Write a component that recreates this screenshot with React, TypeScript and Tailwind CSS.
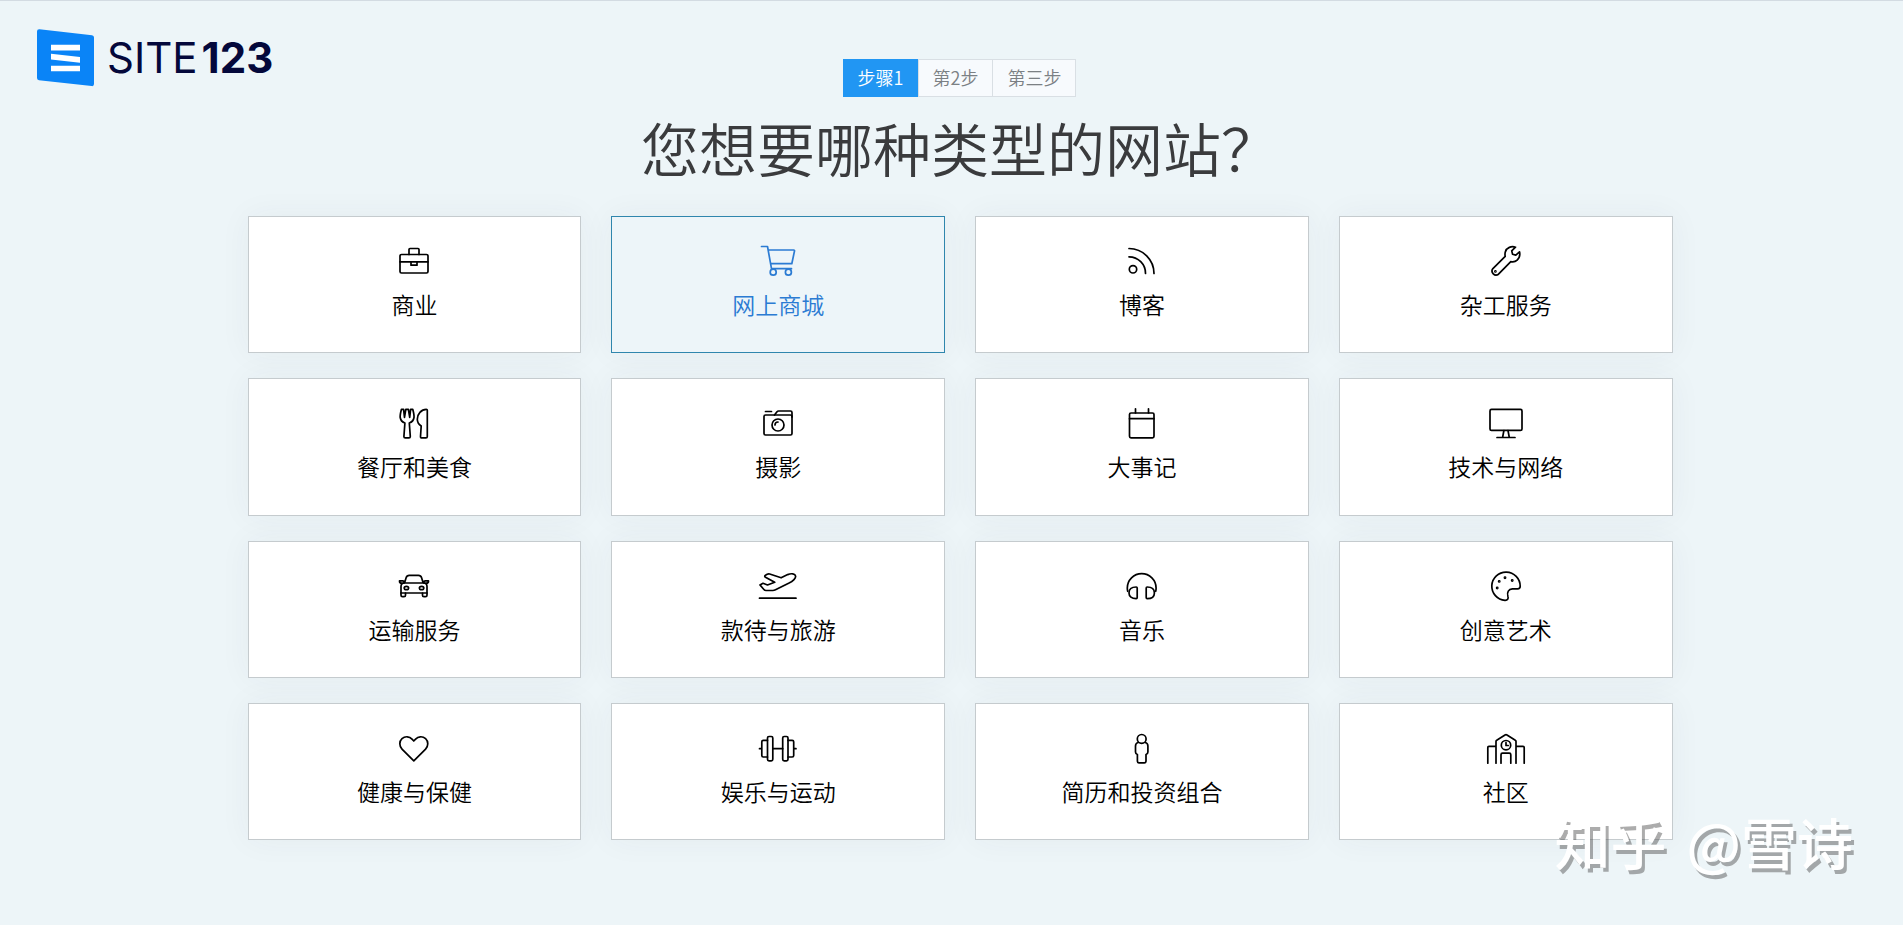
import { ReactNode, useState } from "react";
import clsx from "clsx";

type Category = {
  id: string;
  label: string;
  icon: ReactNode;
};

const steps = ["步骤1", "第2步", "第三步"];

const categories: Category[] = [
  {
    id: "business",
    label: "商业",
    icon: (
      <>
        <rect x="6" y="9.5" width="28" height="18.5" rx="1.5" />
        <path d="M15 9.5V4.5a1 1 0 0 1 1-1h8a1 1 0 0 1 1 1v5M6 16.8h28M17 16.8v3.4h6v-3.4" />
      </>
    ),
  },
  {
    id: "store",
    label: "网上商城",
    icon: (
      <>
        <path d="M3.5 1.5h6l4 22.2h20M10.3 5h25.4a.8.8 0 0 1 .8 1l-2.7 12.7H12.6" />
        <circle cx="15.2" cy="27.2" r="3" />
        <circle cx="30.4" cy="27.2" r="3" />
      </>
    ),
  },
  {
    id: "blog",
    label: "博客",
    icon: (
      <>
        <circle cx="11" cy="24.3" r="3.7" />
        <path d="M7 11.8a16.5 16.5 0 0 1 16.5 16.7M7 3.5a25 25 0 0 1 25 25" />
      </>
    ),
  },
  {
    id: "handyman",
    label: "杂工服务",
    icon: (
      <>
        <path d="M29.5 2.2C25.5.8 20.5 2.5 19.3 7c-.4 1.6-.4 3-.1 4.4L6.900 23.600a4 4 0 0 0 5.600 5.600l12.300-12.600c5 1.200 9-2.500 9-7.500 0-.8-.1-1.500-.3-2.300l-3.700 3.300-3.200-.9-.9-3.300z" />
        <circle cx="9.4" cy="26.4" r=".5" />
      </>
    ),
  },
  {
    id: "food",
    label: "餐厅和美食",
    icon: (
      <>
        <path d="M7.4 2.4C6.4 6 6 9 6.2 10.5c.5 3 2.2 4.7 4.7 5.5L9.9 29.5q0 1.4 1.4 1.4h3.6q1.4 0 1.4-1.4L15.3 16c2.5-.8 4.2-2.5 4.7-5.5.2-1.5-.2-4.5-1.2-8.1h-2.2l-.9 8-1.3-8h-2.6l-1.3 8-.9-8z" />
        <path d="M33.3 3.2v26.3q0 1.4-1.4 1.4h-4q-1.5 0-1.4-1.4l.7-10.5c-3-2-3.9-4-3.9-6.8 0-5 4-9.8 9-9.8q1 0 1 .8z" />
      </>
    ),
  },
  {
    id: "photo",
    label: "摄影",
    icon: (
      <>
        <rect x="6" y="8" width="28" height="20" rx="1.5" />
        <path d="M7.5 4.5h6M16.5 8l2.500-3.300q.6-.7 1.500-.7h12q1.500 0 1.500 1.500V10M17 18a3 3 0 0 1 3-3" />
        <circle cx="20" cy="18" r="6" />
      </>
    ),
  },
  {
    id: "events",
    label: "大事记",
    icon: (
      <>
        <rect x="7.500" y="6" width="24.500" height="24.800" rx="1.5" />
        <path d="M13.5 1.800V6M26.500 1.800V6M7.500 11.700H32" />
      </>
    ),
  },
  {
    id: "tech",
    label: "技术与网络",
    icon: (
      <>
        <rect x="4" y="2.4" width="32" height="21" rx="1.5" />
        <path d="M17.9 23.5l-1.300 7M22 23.500l1.300 7M11 30.500h18" />
      </>
    ),
  },
  {
    id: "transport",
    label: "运输服务",
    icon: (
      <>
        <path d="M10.5 13l1.700-5.500q.7-2.200 3-2.200h9.300q2.300 0 3 2.200L29.200 13M7 23v-6.500q0-3.500 3.500-3.500h19q3.500 0 3.500 3.500V23zM10 13.200H7.500q-2 0-2-2.300h3.300q1.300 0 1.300 1.300M29.900 13.200h2.600q2 0 2-2.300h-3.300q-1.300 0-1.300 1.300" />
        <path d="M7 23v2.200a1.500 1.500 0 0 0 1.500 1.500h1.500a1.500 1.500 0 0 0 1.500-1.500V23M28.500 23v2.200a1.500 1.500 0 0 0 1.500 1.500h1.500a1.500 1.500 0 0 0 1.500-1.500V23" />
        <ellipse cx="12.400" cy="18" rx="2.200" ry="1.700" />
        <ellipse cx="27.600" cy="18" rx="2.200" ry="1.700" />
      </>
    ),
  },
  {
    id: "travel",
    label: "款待与旅游",
    icon: (
      <>
        <path d="M1.5 28.2H38" />
        <path d="M2 15l3-1.700 4.500 1.700 7.200-2.700L7.500 7.200q-1.500-1 0-2l1.700-1q1.200-.6 2.500-.2l11.400 3.800 6.600-3.200c3.500-1.500 7.500-1 7.900 1.500.3 2.500-2 4.500-7 7.200l-13.100 6.500q-1.300.7-2.700.7H8q-1.300 0-2.100-1z" />
      </>
    ),
  },
  {
    id: "music",
    label: "音乐",
    icon: (
      <>
        <path d="M5.700 21.300Q5.300 19.800 5.300 18a14.400 14.400 0 0 1 28.800 0q0 1.800-.4 3.300" />
        <path d="M15.200 18v9.600a1 1 0 0 1-1 1C9.700 28.600 7 26.500 7 22.900S9.700 17 14.200 17a1 1 0 0 1 1 1zM24.200 18v9.600a1 1 0 0 0 1 1c4.500 0 7.200-2.100 7.200-5.700S29.700 17 25.200 17a1 1 0 0 0-1 1z" />
      </>
    ),
  },
  {
    id: "art",
    label: "创意艺术",
    icon: (
      <>
        <path d="M34.200 16.300A14.200 14.200 0 1 0 19 30.400c2.400.1 3.800-1.600 2.900-4.200-1.200-4 .7-7.200 4.500-7.400h5.200c1.600 0 2.600-1 2.600-2.500z" />
        <circle cx="11.200" cy="18" r=".6" />
        <circle cx="13.200" cy="11.400" r=".6" />
        <circle cx="19" cy="7.800" r=".6" />
        <circle cx="26.200" cy="10.500" r=".6" />
      </>
    ),
  },
  {
    id: "health",
    label: "健康与保健",
    icon: (
      <path d="M19.800 28.900L8 17.200C5.200 14.300 5 9.300 8 6.600c3.200-2.800 7.500-2.200 10 .5l1.800 1.900L21.600 7.100c2.500-2.700 6.800-3.300 10-.5 3 2.700 2.800 7.700 0 10.600z" />
    ),
  },
  {
    id: "sports",
    label: "娱乐与运动",
    icon: (
      <>
        <rect x="9.500" y="4.500" width="5.300" height="24.300" rx="1.500" />
        <rect x="24.700" y="4.500" width="5.300" height="24.300" rx="1.500" />
        <path d="M1.500 16.700h2.300M14.800 16.700h9.900M35.700 16.700H38M9.500 8.300H5.300q-1.500 0-1.500 1.500v13.700q0 1.500 1.500 1.500h4.200M30 8.300h4.200q1.500 0 1.500 1.500v13.700q0 1.500-1.500 1.500H30" />
      </>
    ),
  },
  {
    id: "resume",
    label: "简历和投资组合",
    icon: (
      <>
        <circle cx="19.700" cy="6.900" r="4.400" />
        <path d="M16.300 10.500q-2.800.5-2.800 3.500v6q0 2 1.900 2.500v6.700q0 1.600 1.600 1.600h5.400q1.600 0 1.600-1.600v-6.700q1.900-.5 1.900-2.500v-6q0-3-2.800-3.500" />
      </>
    ),
  },
  {
    id: "community",
    label: "社区",
    icon: (
      <>
        <path d="M10 31.200V9.500q0-.8.700-1.200L19 3q1-.6 2 0l8.300 5.300q.7.400.7 1.200v21.700M10 14.300H3q-1.200 0-1.200 1.200v15.700M30 14.300h7q1.200 0 1.200 1.200v15.700M15 31.200v-8.500q0-1.500 1.500-1.500h6.800q1.500 0 1.500 1.500v8.500M20 10.500v3h2.200" />
        <circle cx="20" cy="13.200" r="4.700" />
      </>
    ),
  },
];

function Logo() {
  return (
    <a href="#" className="flex w-fit items-center gap-3 text-[#04083b]">
      <svg width="58" height="58" viewBox="0 0 58 58" aria-hidden="true">
        <path
          d="M2.500.3L55 6.200q2 .3 2 2.300v46.500q0 2.400-2.300 2.100L2 51.200q-2-.2-2-2.200V2.500Q0 .1 2.500.3z"
          fill="#0a84f7"
        />
        <path
          d="M14 15.800h29v5.700H14zM14 24.800l29 3.200v5.700l-29-3.200zM14 36.800h29v5.500H14z"
          fill="#fff"
        />
      </svg>
      <span className="flex items-baseline gap-1 font-[Inter,sans-serif] text-[42px] leading-[58px]">
        <span className="font-normal">SITE</span>
        <span className="font-bold">123</span>
      </span>
    </a>
  );
}

function CategoryCard({
  category,
  selected,
  onSelect,
}: {
  category: Category;
  selected: boolean;
  onSelect: () => void;
}) {
  return (
    <button
      type="button"
      aria-pressed={selected}
      onClick={onSelect}
      className={clsx(
        "flex flex-col items-center border pt-7 shadow-[0_0_30px_rgba(60,50,80,0.05)]",
        selected
          ? "border-[#2f86ad] bg-[#edf5f9] text-[#2b7bd3]"
          : "border-[#c5cbce] bg-white text-black",
      )}
    >
      <svg
        width="40"
        height="32"
        viewBox="0 0 40 32"
        fill="none"
        stroke="currentColor"
        strokeWidth="1.7"
        strokeLinecap="round"
        strokeLinejoin="round"
        aria-hidden="true"
      >
        {category.icon}
      </svg>
      <span className="mt-[11px] text-[23px] leading-8">{category.label}</span>
    </button>
  );
}

export default function App() {
  const [currentStep, setCurrentStep] = useState(0);
  const [selectedId, setSelectedId] = useState("store");

  return (
    <div className="relative min-h-screen border-t border-[#d3dbe2] bg-[#edf5f8] font-['Noto_Sans_CJK_SC',sans-serif] font-[350]">
      <header className="px-[37px] pt-7">
        <Logo />
      </header>

      <main className="-mt-7 pb-20 pl-[17px]">
        <nav className="flex justify-center text-lg leading-[34px]">
          {steps.map((step, i) => (
            <button
              key={step}
              type="button"
              onClick={() => setCurrentStep(i)}
              className={clsx(
                "-ml-px border px-[14px] pb-0.5",
                i === currentStep
                  ? "border-[#2196f3] bg-[#2196f3] text-white"
                  : "border-[#d9dfe4] bg-[#f7fafd] text-[#7b8084]",
              )}
            >
              {step}
            </button>
          ))}
        </nav>

        <h1 className="mt-[14px] text-center text-[58px] leading-[72px] text-[#3a3b3d]">
          您想要哪种类型的网站？
        </h1>

        <div className="mx-auto mt-[33px] grid min-h-[624px] max-w-[1425px] auto-rows-fr grid-cols-4 gap-x-[30px] gap-y-[25px]">
          {categories.map((category) => (
            <CategoryCard
              key={category.id}
              category={category}
              selected={category.id === selectedId}
              onSelect={() => setSelectedId(category.id)}
            />
          ))}
        </div>
      </main>

      {/* Watermark */}
      <div className="pointer-events-none absolute right-[50px] bottom-12 flex gap-5 text-[56px] leading-[72px] font-medium text-white [text-shadow:3px_4px_0_rgba(90,90,90,0.5)]">
        <span>知乎</span>
        <span>@雪诗</span>
      </div>
    </div>
  );
}
